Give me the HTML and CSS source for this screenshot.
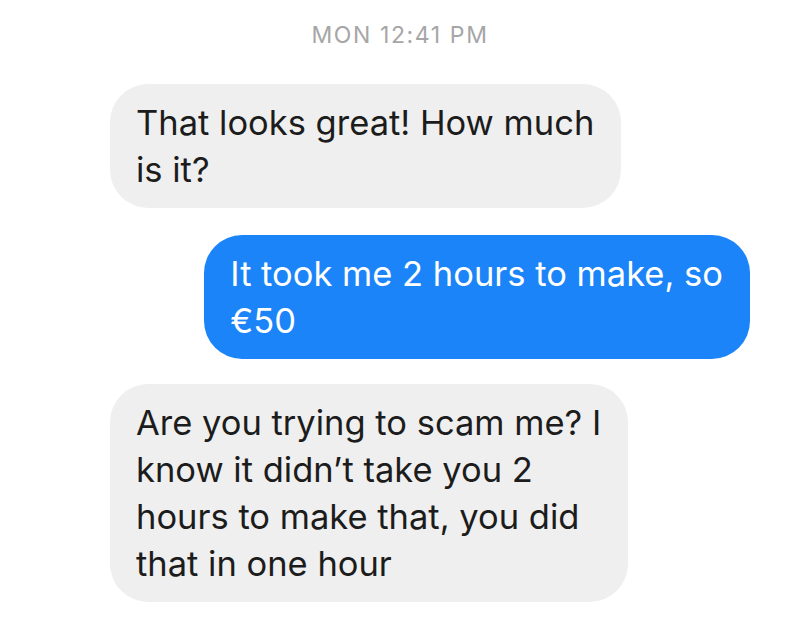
FILE: index.html
```html
<!DOCTYPE html>
<html lang="en">
<head>
<meta charset="utf-8">
<title>Messages</title>
<link rel="stylesheet" href="styles.css">
</head>
<body>
<main class="thread">
  <div class="timestamp">MON 12:41 PM</div>
  <div class="bubble bubble-in">That looks great! How much<br>is it?</div>
  <div class="bubble bubble-out">It took me 2 hours to make, so<br>€50</div>
  <div class="bubble bubble-in">Are you trying to scam me? I<br>know it didn’t take you 2<br>hours to make that, you did<br>that in one hour</div>
</main>
</body>
</html>
```

FILE: styles.css
```css
html, body {
  margin: 0;
  padding: 0;
  background: #ffffff;
}

.thread {
  display: flex;
  flex-direction: column;
  width: 800px;
  padding: 20px 0 0;
  font-family: Inter, "Noto Sans", "Liberation Sans", sans-serif;
}

.timestamp {
  align-self: center;
  font-size: 23px;
  line-height: 30px;
  letter-spacing: 1.6px;
  color: #a6a6a6;
  margin-bottom: 34px;
}

.bubble {
  box-sizing: border-box;
  width: fit-content;
  padding: 15px 27px 15px 26px;
  border-radius: 38px;
  font-size: 34.5px;
  line-height: 47px;
  white-space: nowrap;
}

.bubble-in {
  align-self: flex-start;
  margin-left: 110px;
  background: #efefef;
  color: #1c1c1c;
}

.bubble-out {
  align-self: flex-end;
  margin-right: 50px;
  background: #1b84f8;
  color: #ffffff;
  margin-top: 27px;
  margin-bottom: 25px;
}
```
